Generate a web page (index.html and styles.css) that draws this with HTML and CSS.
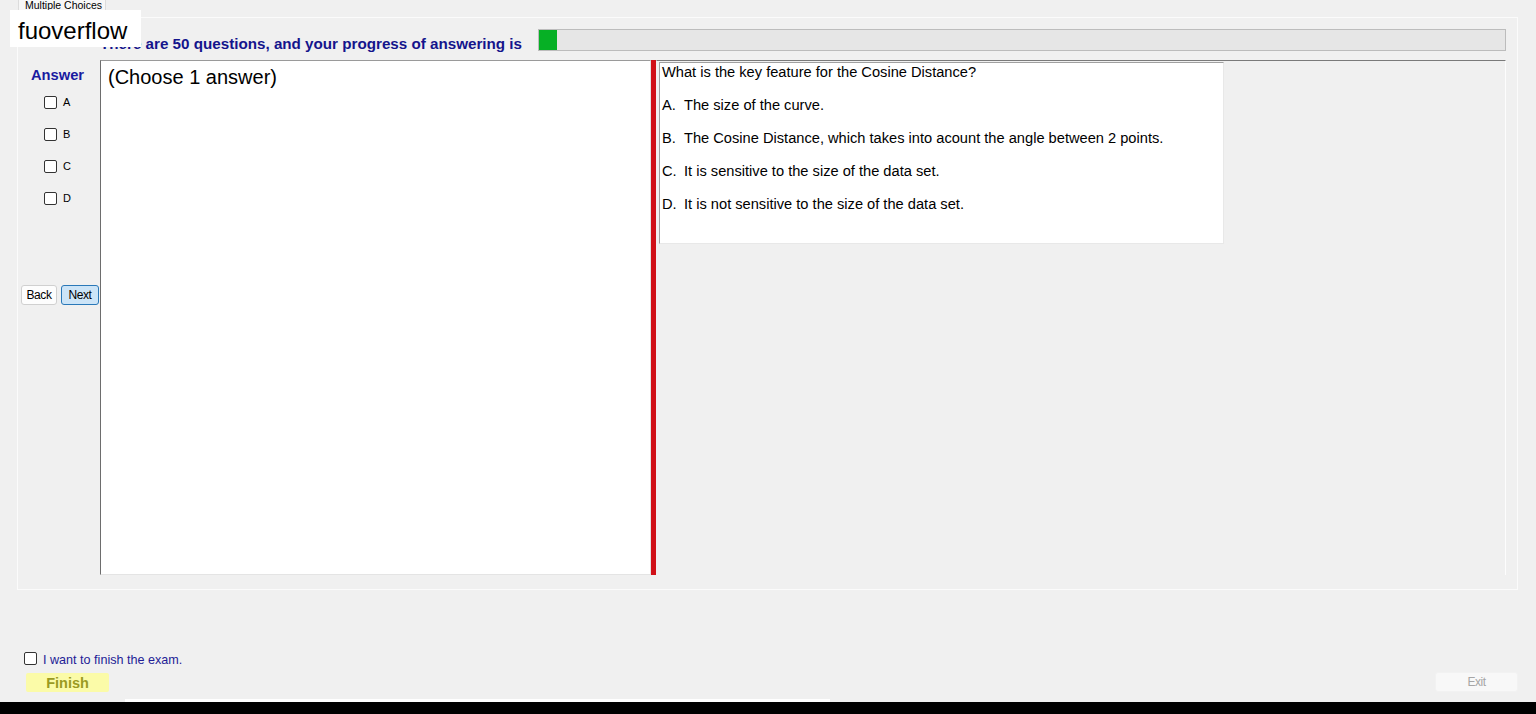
FILE: index.html
```html
<!DOCTYPE html>
<html lang="en">
<head>
  <meta charset="UTF-8">
  <title>Multiple Choices</title>
  <link rel="stylesheet" href="styles.css">
</head>
<body>
  <div class="window">
    <div class="tabstrip">
      <div class="tab">Multiple Choices</div>
    </div>

    <div class="group">
      <div class="header">
        <span class="header-text">There are 50 questions, and your progress of answering is</span>
        <div class="progress"><div class="progress-fill" style="width: 18px"></div></div>
      </div>

      <div class="main">
        <div class="side">
          <div class="answer-title">Answer</div>
          <div class="options">
            <label class="option"><span class="box"></span>A</label>
            <label class="option"><span class="box"></span>B</label>
            <label class="option"><span class="box"></span>C</label>
            <label class="option"><span class="box"></span>D</label>
          </div>
          <div class="nav">
            <button class="btn back">Back</button>
            <button class="btn next">Next</button>
          </div>
        </div>

        <div class="choose-box">(Choose 1 answer)</div>
        <div class="splitter"></div>

        <div class="right">
          <div class="question-box">
            <p>What is the key feature for the Cosine Distance?</p>
            <p><span class="letter">A.</span>The size of the curve.</p>
            <p><span class="letter">B.</span>The Cosine Distance, which takes into acount the angle between 2 points.</p>
            <p><span class="letter">C.</span>It is sensitive to the size of the data set.</p>
            <p><span class="letter">D.</span>It is not sensitive to the size of the data set.</p>
          </div>
        </div>
      </div>
    </div>

    <div class="footer">
      <div class="footer-left">
        <label class="finish-check"><span class="box"></span>I want to finish the exam.</label>
        <button class="finish">Finish</button>
      </div>
      <button class="exit">Exit</button>
    </div>
    <div class="strip"></div>

    <div class="watermark">fuoverflow</div>
  </div>
  <div class="taskbar"></div>
</body>
</html>
```

FILE: styles.css
```css
* {
  box-sizing: border-box;
}

body {
  margin: 0;
  height: 714px;
  overflow: hidden;
  background: #f0f0f0;
  font-family: "Liberation Sans", Arial, sans-serif;
  color: #000;
  display: flex;
  flex-direction: column;
}

.window {
  position: relative;
  height: 702px;
  display: flex;
  flex-direction: column;
}

/* tab on top */
.tabstrip {
  height: 17px;
  padding-left: 18px;
}

.tab {
  width: 88px;
  height: 14px;
  background: #f7f7f7;
  border-left: 1px solid #dcdcdc;
  border-right: 1px solid #dcdcdc;
  font-size: 10.5px;
  line-height: 11px;
  padding-left: 6px;
  overflow: hidden;
  white-space: nowrap;
}

.group {
  margin: 0 18px 0 17px;
  height: 573px;
  border: 1px solid #fbfbfb;
  padding: 11px 11px 0 2px;
  display: flex;
  flex-direction: column;
}

.header {
  height: 22px;
  display: flex;
  align-items: flex-end;
  padding-left: 80px;
}

.header-text {
  font-size: 15.2px;
  font-weight: bold;
  line-height: 14px;
  color: #14148c;
  white-space: nowrap;
}

.progress {
  flex: 1;
  height: 22px;
  margin-left: 16px;
  background: #e6e6e6;
  border: 1px solid #bcbcbc;
}

.progress-fill {
  height: 100%;
  background: #06b025;
}

.main {
  margin-top: 9px;
  height: 515px;
  display: flex;
}

/* left column with the answer boxes */
.side {
  width: 80px;
  padding-top: 7px;
  display: flex;
  flex-direction: column;
}

.answer-title {
  padding-left: 11px;
  font-size: 14.7px;
  font-weight: bold;
  line-height: 16px;
  color: #1a1aa0;
}

.options {
  margin-top: 3px;
}

.option {
  height: 32px;
  display: flex;
  align-items: center;
  gap: 6px;
  padding-left: 24px;
  font-size: 11px;
}

.box {
  width: 13px;
  height: 13px;
  border: 1px solid #333;
  border-radius: 2px;
  background: #fff;
}

.nav {
  margin-top: 71px;
  display: flex;
  gap: 4px;
  padding-left: 1px;
}

.btn {
  height: 20px;
  padding: 0;
  font-family: "Liberation Sans", Arial, sans-serif;
  font-size: 12px;
  letter-spacing: -0.4px;
  border-radius: 3px;
  color: #000;
}

.back {
  width: 36px;
  background: #fdfdfd;
  border: 1px solid #d0d0d0;
}

.next {
  width: 38px;
  background: #cce4f7;
  border: 1px solid #2a78b8;
}

.choose-box {
  width: 551px;
  background: #fff;
  border-top: 1px solid #9a9a9a;
  border-left: 1px solid #6d6d6d;
  border-right: 1px solid #e4e4e4;
  border-bottom: 1px solid #e4e4e4;
  padding: 5px 0 0 7px;
  font-size: 20px;
  line-height: 23px;
}

.splitter {
  width: 5px;
  background: #d01018;
}

.right {
  flex: 1;
  border-top: 1px solid #7a7a7a;
  border-left: 1px solid #f0f0f0;
  border-right: 1px solid #fdfdfd;
  padding: 1px 0 0 2px;
}

.question-box {
  width: 565px;
  height: 182px;
  background: #fff;
  border-top: 1px solid #a0a0a0;
  border-left: 1px solid #a0a0a0;
  border-right: 1px solid #e8e8e8;
  border-bottom: 1px solid #e8e8e8;
  padding: 1px 2px;
  font-size: 14.65px;
  line-height: 16px;
}

.question-box p {
  margin: 0 0 17px;
  white-space: nowrap;
}

.letter {
  display: inline-block;
  width: 22px;
}

/* bottom area */
.footer {
  flex: 1;
  display: flex;
  justify-content: space-between;
  align-items: flex-end;
  padding: 0 18px 7px 0;
}

.footer-left {
  display: flex;
  flex-direction: column;
}

.finish-check {
  height: 14px;
  display: flex;
  align-items: center;
  gap: 6px;
  padding-left: 24px;
  font-size: 12.6px;
  line-height: 14px;
  color: #231c96;
}

.finish-check span + * ,
.finish-check {
  padding-top: 2px;
}

.finish-check .box {
  margin-top: -4px;
}

.finish {
  margin: 7px 0 0 26px;
  width: 83px;
  height: 19px;
  padding: 0;
  border: none;
  border-radius: 2px;
  background: #fbfba8;
  color: #9a9a22;
  font-family: "Liberation Sans", Arial, sans-serif;
  font-size: 14.5px;
  font-weight: bold;
}

.exit {
  width: 83px;
  height: 20px;
  padding: 0;
  border: 1px solid #f2f2f2;
  border-radius: 3px;
  background: #f8f8f8;
  color: #a6a6a6;
  font-family: "Liberation Sans", Arial, sans-serif;
  font-size: 12px;
  letter-spacing: -0.5px;
}

.strip {
  height: 3px;
  width: 705px;
  margin-left: 125px;
  background: #fff;
}

/* watermark sits over the header */
.watermark {
  position: absolute;
  left: 10px;
  top: 10px;
  width: 131px;
  height: 37px;
  background: #fff;
  padding-left: 8px;
  font-size: 24px;
  line-height: 42px;
}

.taskbar {
  height: 12px;
  background: #000;
}
```
